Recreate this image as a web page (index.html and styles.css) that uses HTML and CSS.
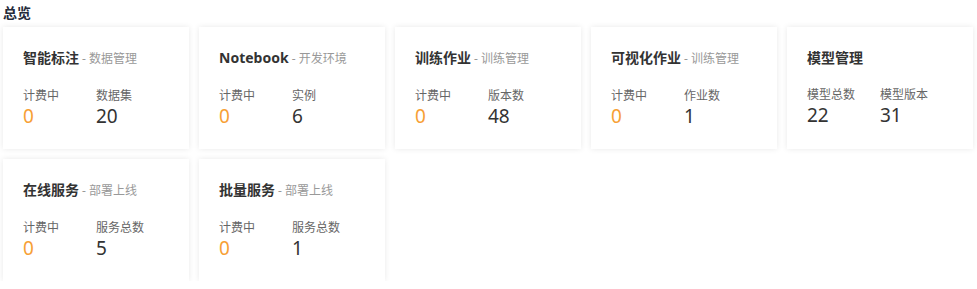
FILE: index.html
```html
<!DOCTYPE html>
<html lang="zh-CN">
<head>
  <meta charset="UTF-8">
  <title>总览</title>
  <link rel="stylesheet" href="styles.css">
</head>
<body>
<div class="overview">
  <h3 class="overview-title">总览</h3>
  <div class="card-grid">

    <div class="card">
      <div class="card-head"><b>智能标注</b><span> - 数据管理</span></div>
      <div class="stats">
        <div class="stat"><p>计费中</p><em class="warn">0</em></div>
        <div class="stat"><p>数据集</p><em>20</em></div>
      </div>
    </div>

    <div class="card">
      <div class="card-head"><b>Notebook</b><span> - 开发环境</span></div>
      <div class="stats">
        <div class="stat"><p>计费中</p><em class="warn">0</em></div>
        <div class="stat"><p>实例</p><em>6</em></div>
      </div>
    </div>

    <div class="card">
      <div class="card-head"><b>训练作业</b><span> - 训练管理</span></div>
      <div class="stats">
        <div class="stat"><p>计费中</p><em class="warn">0</em></div>
        <div class="stat"><p>版本数</p><em>48</em></div>
      </div>
    </div>

    <div class="card">
      <div class="card-head"><b>可视化作业</b><span> - 训练管理</span></div>
      <div class="stats">
        <div class="stat"><p>计费中</p><em class="warn">0</em></div>
        <div class="stat"><p>作业数</p><em>1</em></div>
      </div>
    </div>

    <div class="card">
      <div class="card-head"><b>模型管理</b></div>
      <div class="stats">
        <div class="stat"><p>模型总数</p><em>22</em></div>
        <div class="stat"><p>模型版本</p><em>31</em></div>
      </div>
    </div>

    <div class="card">
      <div class="card-head"><b>在线服务</b><span> - 部署上线</span></div>
      <div class="stats">
        <div class="stat"><p>计费中</p><em class="warn">0</em></div>
        <div class="stat"><p>服务总数</p><em>5</em></div>
      </div>
    </div>

    <div class="card">
      <div class="card-head"><b>批量服务</b><span> - 部署上线</span></div>
      <div class="stats">
        <div class="stat"><p>计费中</p><em class="warn">0</em></div>
        <div class="stat"><p>服务总数</p><em>1</em></div>
      </div>
    </div>

  </div>
</div>
</body>
</html>
```

FILE: styles.css
```css
body {
  margin: 0;
  background: #fff;
  font-family: "Noto Sans", "Noto Sans CJK SC", sans-serif;
  color: #333;
}

.overview {
  padding: 3px 7px 0 3px;
}

.overview-title {
  margin: 0;
  font-size: 14px;
  line-height: 20px;
  font-weight: bold;
  color: #252b3a;
}

.card-grid {
  display: grid;
  grid-template-columns: repeat(5, 1fr);
  gap: 10px;
  margin-top: 4px;
}

.card {
  height: 122px;
  box-sizing: border-box;
  padding: 19px 20px 0 20px;
  background: #fff;
  box-shadow: 0 0 6px rgba(0,0,0,0.09);
}

.card-head {
  line-height: 22px;
  white-space: nowrap;
}

.card-head b {
  font-size: 14px;
  color: #333;
}

.card-head span {
  font-size: 12px;
  color: #999;
}

.stats {
  display: flex;
  margin-top: 18px;
}

.stat {
  width: 73px;
}

.stat p {
  margin: 0;
  font-size: 12px;
  line-height: 16px;
  color: #666;
}

.stat em {
  display: block;
  font-style: normal;
  font-size: 19px;
  line-height: 24px;
  color: #333;
}

.stat em.warn {
  color: #f7a035;
}
```
